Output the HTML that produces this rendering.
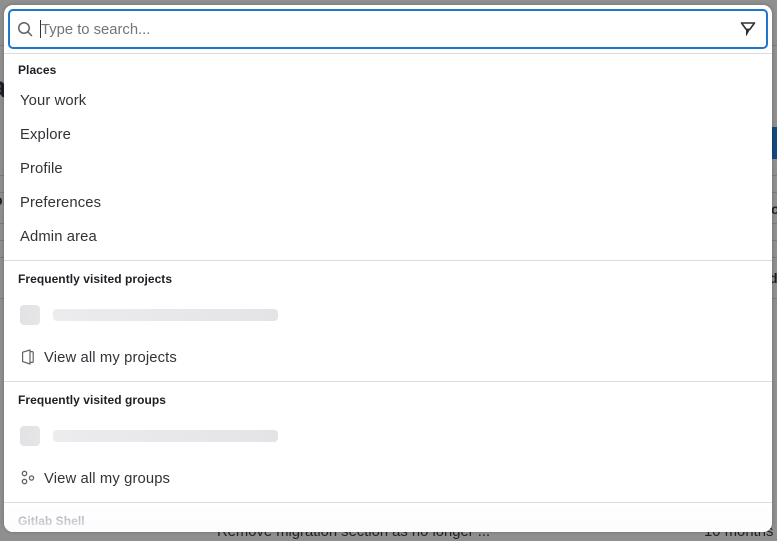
<!DOCTYPE html>
<html><head><meta charset="utf-8"><style>
html,body{margin:0;padding:0;width:777px;height:538px;overflow:hidden;background:#8f8f8f;font-family:"Liberation Sans",sans-serif;}
.a{position:absolute;white-space:nowrap;}
.line{position:absolute;background:#7a7a7a;height:1px;left:0;width:777px;}
#modal{position:absolute;left:4px;top:5px;width:768px;height:527px;background:#fff;border-radius:9px;overflow:hidden;box-shadow:0 0 3px rgba(0,0,0,.25);}
.item{position:absolute;left:16px;font-size:14.8px;line-height:18px;letter-spacing:.12px;color:#333238;white-space:nowrap;}
.head{position:absolute;left:14px;font-size:12px;line-height:16px;font-weight:bold;letter-spacing:.05px;color:#1f1e24;white-space:nowrap;}
.div{position:absolute;left:0;width:768px;height:1px;background:#dcdcde;}
.sq{position:absolute;left:16px;width:20px;height:20px;border-radius:4px;background:linear-gradient(to right,#e2e2e4,#e6e6e8);}
.bar{position:absolute;left:49px;width:225px;height:12px;border-radius:4px;background:linear-gradient(to right,#ececee,#e4e4e6);}
</style></head><body>
<div class="line" style="top:45px"></div>
<div class="line" style="top:175px"></div>
<div class="line" style="top:192px"></div>
<div class="line" style="top:223px"></div>
<div class="line" style="top:240px"></div>
<div class="line" style="top:257px"></div>
<div class="line" style="top:298px"></div>
<div class="a" style="left:772px;top:127px;width:5px;height:32px;background:#134a7c"></div>
<div class="a" style="left:-10px;top:72px;font-size:30px;font-weight:bold;color:#1f1e24;line-height:32px">a</div>
<div class="a" style="left:-6px;top:192px;font-size:14px;font-weight:bold;color:#1f1e24">p</div>
<div class="a" style="left:-6px;top:212px;font-size:12px;color:#333">x</div>
<div class="a" style="left:771px;top:201px;font-size:14px;font-weight:bold;color:#1f1e24">or</div>
<div class="a" style="left:769px;top:270px;font-size:14px;font-weight:bold;color:#1f1e24">d</div>
<div class="a" style="left:217px;top:523px;font-size:14.8px;letter-spacing:.0px;line-height:18px;color:#222">Remove migration section as no longer ...</div>
<div class="a" style="left:704px;top:523px;font-size:14.8px;letter-spacing:.04px;line-height:18px;color:#222">10 months</div>
<div id="modal">
  <div style="position:absolute;left:4px;top:4px;width:756px;height:36px;border:2px solid #1f75cb;border-radius:5px;background:#fff"></div>
  <svg style="position:absolute;left:13px;top:16px" width="16" height="16" viewBox="0 0 16 16" fill="none" stroke="#626168" stroke-width="1.5"><circle cx="7" cy="7" r="5.25"/><path d="M11 11l3.6 3.6" stroke-linecap="round"/></svg>
  <div style="position:absolute;left:36px;top:15px;width:1px;height:18px;background:#333238"></div>
  <div class="a" style="left:37px;top:16px;font-size:14.8px;line-height:18px;letter-spacing:.0px;color:#737278">Type to search...</div>
  <svg style="position:absolute;left:736px;top:16px" width="16" height="16" viewBox="0 0 16 16" fill="none" stroke="#2f2e34" stroke-width="1.6" stroke-linejoin="round"><path d="M1.500 2H14.500L9.800 8.400H6.200z"/><path d="M6.300 8.600V14.600L9.600 8.600z" fill="#2f2e34" stroke-width=".6"/></svg>
  <div class="div" style="top:48px"></div>
  <div class="head" style="top:57px">Places</div>
  <div class="item" style="top:87px">Your work</div>
  <div class="item" style="top:121px">Explore</div>
  <div class="item" style="top:155px">Profile</div>
  <div class="item" style="top:189px">Preferences</div>
  <div class="item" style="top:223px">Admin area</div>
  <div class="div" style="top:255px"></div>
  <div class="head" style="top:266px">Frequently visited projects</div>
  <div class="sq" style="top:300px"></div>
  <div class="bar" style="top:304px"></div>
  <svg style="position:absolute;left:15px;top:343px" width="18" height="18" viewBox="0 0 18 18" fill="none" stroke="#626168" stroke-width="1.200" stroke-linejoin="round"><path d="M3.600 4.200L11 2v14l-7.400-2.400zM11 3.600h2.300a.9.9 0 0 1 .9.9v9a.9.9 0 0 1-.9.9H11"/></svg>
  <div class="item" style="left:40px;top:344px">View all my projects</div>
  <div class="div" style="top:376px"></div>
  <div class="head" style="top:387px">Frequently visited groups</div>
  <div class="sq" style="top:421px"></div>
  <div class="bar" style="top:425px"></div>
  <svg style="position:absolute;left:16px;top:465px" width="16" height="16" viewBox="0 0 16 16" fill="none" stroke="#626168" stroke-width="1.300"><circle cx="4.500" cy="3.500" r="2.200"/><circle cx="4.500" cy="11.500" r="2.200"/><circle cx="11.500" cy="8" r="2.100"/></svg>
  <div class="item" style="left:40px;top:465px">View all my groups</div>
  <div class="div" style="top:497px"></div>
  <div class="head" style="top:508px;color:#8d8d92">Gitlab Shell</div>
  <div style="position:absolute;left:0;top:498px;width:768px;height:29px;background:linear-gradient(to bottom,rgba(255,255,255,0),rgba(252,252,255,.85))"></div>
</div>
</body></html>
